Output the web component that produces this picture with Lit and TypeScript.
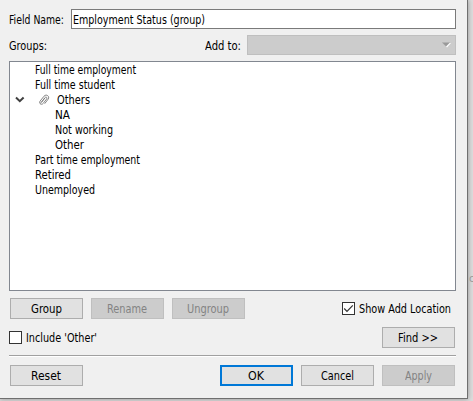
import { LitElement, html, css, svg } from "lit";
import { customElement, property } from "lit/decorators.js";

/* Text label whose glyphs are condensed to a given advance width. */
@customElement("fit-label")
class FitLabel extends LitElement {
  @property() text = "";
  @property({ type: Number }) width = 0;
  static styles = css`
    :host { display: block; flex: none; height: 15px; line-height: 15px; padding-top: 1px; box-sizing: border-box; }
    .run { display: inline-block; white-space: pre; line-height: 15px; transform-origin: 0 50%; vertical-align: top; }
  `;
  render() {
    return html`<span class="run">${this.text}</span>`;
  }
  updated() {
    const run = this.renderRoot.querySelector(".run") as HTMLElement;
    run.style.transform = "none";
    const natural = run.getBoundingClientRect().width;
    this.style.width = this.width + "px";
    run.style.transform = `scaleX(${this.width / natural})`;
  }
}

const label = (text: string, width: number) =>
  html`<fit-label .text=${text} .width=${width}></fit-label>`;

const button = (text: string, width: number, kind = "") =>
  html`<button class="btn ${kind}" ?disabled=${kind === "off"}>${label(text, width)}</button>`;

type Row = { text: string; width: number; level: "top" | "parent" | "child" };
const rows: Row[] = [
  { text: "Full time employment", width: 101, level: "top" },
  { text: "Full time student", width: 80, level: "top" },
  { text: "Others", width: 33, level: "parent" },
  { text: "NA", width: 15, level: "child" },
  { text: "Not working", width: 58, level: "child" },
  { text: "Other", width: 29, level: "child" },
  { text: "Part time employment", width: 105, level: "top" },
  { text: "Retired", width: 36, level: "top" },
  { text: "Unemployed", width: 60, level: "top" },
];

const chevron = svg`<path d="M1 1.5 L4.8 5.2 L8.6 1.5" fill="none" stroke="#404040" stroke-width="2"/>`;
const clip = svg`<path d="M2.6 9.2 L6.9 3.7 C8 2.4 9.6 3.6 8.7 4.9 L5.2 9.4 C3.5 11.4 0.6 9.5 2 7.2 L6 2.2 C8.3 -0.4 12 2.2 10.2 5.1 L6.9 9.4 M3.9 7.8 L6.7 4.3" fill="none" stroke="#777" stroke-width="0.9" stroke-linecap="round"/>`;

@customElement("app-root")
class AppRoot extends LitElement {
  static styles = css`
    :host {
      display: block; width: 473px; height: 401px; overflow: hidden;
      font: 12px "DejaVu Sans Condensed", "DejaVu Sans", sans-serif; color: #000; background: #d9d9d9;
    }
    * { box-sizing: border-box; }
    .desk { display: flex; align-items: flex-start; height: 401px; background: #dcdcdc; }
    .dialog {
      flex: none; width: 468px; height: 399px; background: #f0f0f0;
      border-right: 1px solid #6f6f6f; border-bottom: 1px solid #6f6f6f;
      box-shadow: 0 0 5px rgba(0, 0, 0, .35);
      padding: 9px 11px 0 9px; display: flex; flex-direction: column;
    }
    .behind { margin: 271px 0 0 1px; color: #999; font-size: 11px; line-height: 15px; position: relative; }
    .line { display: flex; align-items: center; flex: none; }
    .name { height: 20px; gap: 7px; }
    .input { flex: 1; height: 20px; background: #fff; border: 1px solid #7a7a7a; display: flex; align-items: center; padding-left: 1px; }
    .groups { height: 20px; margin-top: 6px; }
    .push { margin-left: auto; }
    .select { width: 209px; height: 20px; margin-left: 6px; background: #ccc; border: 1px solid #bfbfbf; display: flex; align-items: center; justify-content: flex-end; padding-right: 4px; }
    .tree { height: 230px; margin-top: 6px; flex: none; background: #fff; border: 1px solid #828790; }
    .row { height: 15px; display: flex; align-items: center; }
    .top { padding-left: 25px; }
    .child { padding-left: 45px; }
    .parent { padding-left: 5px; }
    .arrow { width: 10px; height: 7px; }
    .clip { width: 12px; height: 12px; margin: 0 7px 0 13px; }
    .actions { height: 21px; margin: 7px 2px 0 1px; gap: 8px; }
    .options { height: 21px; margin: 8px 1px 0 0; }
    .btn {
      width: 73px; height: 21px; flex: none; padding: 0 1px 0 0; margin: 0; font: inherit; color: #000;
      background: #e1e1e1; border: 1px solid #adadad; display: flex; align-items: center; justify-content: center;
    }
    .off { background: #ccc; border-color: #bfbfbf; color: #838383; }
    .default { border: 2px solid #0078d7; }
    .check { display: flex; align-items: center; gap: 4px; }
    .actions .check { padding-right: 3px; }
    .box { width: 13px; height: 13px; border: 1px solid #333; background: #fff; display: flex; }
    .rule { flex: none; height: 2px; margin-top: 7px; background: #a0a0a0; border-bottom: 1px solid #fff; }
    .footer { height: 21px; margin: 8px 1px 0 1px; gap: 8px; }
  `;
  render() {
    return html`<div class="desk">
      <div class="dialog">
        <div class="line name">${label("Field Name:", 55)}
          <div class="input">${label("Employment Status (group)", 132)}</div></div>
        <div class="line groups">${label("Groups:", 38)}
          <div class="push">${label("Add to:", 36)}</div>
          <div class="select"><svg width="9" height="6" viewBox="0 0 9 6">
            <path d="M1 1 H9 L5 5.5Z" fill="#fff"/><path d="M0 .5 H8 L4 4.5Z" fill="#999"/></svg></div></div>
        <div class="tree">${rows.map((r) => html`<div class="row ${r.level}">
          ${r.level === "parent" ? html`
            <svg class="arrow" viewBox="0 0 10 7">${chevron}</svg>
            <svg class="clip" viewBox="0 0 12 12">${clip}</svg>` : ""}
          ${label(r.text, r.width)}</div>`)}</div>
        <div class="line actions">
          ${button("Group", 31)}${button("Rename", 40, "off")}${button("Ungroup", 42, "off")}
          <div class="check push"><div class="box"><svg width="11" height="11" viewBox="0 0 11 11">
            <path d="M1.2 5.5 L4 8.3 L9.8 2.3" fill="none" stroke="#333" stroke-width="1.2"/></svg></div>
            ${label("Show Add Location", 92)}</div>
        </div>
        <div class="line options">
          <div class="check"><div class="box"></div>${label("Include 'Other'", 71)}</div>
          <div class="push">${button("Find >>", 40)}</div>
        </div>
        <div class="rule"></div>
        <div class="line footer">${button("Reset", 30)}
          <div class="push">${button("OK", 16, "default")}</div>${button("Cancel", 33)}${button("Apply", 27, "off")}</div>
      </div>
      <div class="behind">c</div>
    </div>`;
  }
}
